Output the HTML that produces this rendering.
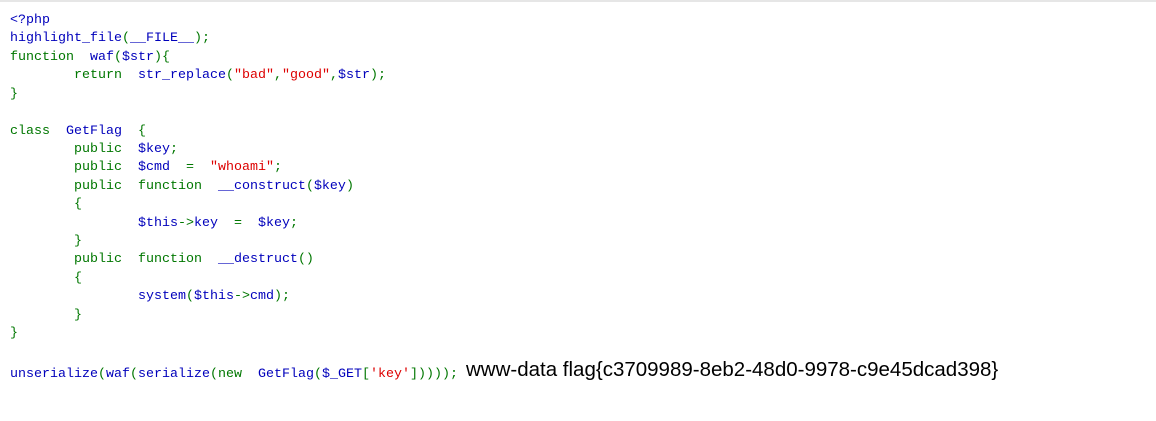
<!DOCTYPE html>
<html><head><meta charset="utf-8"><style>
html,body{margin:0;padding:0;background:#fff;width:1156px;height:421px;overflow:hidden}
.top{position:absolute;left:0;top:0;width:1156px;height:2px;background:#e6e6e6}
code{position:absolute;left:10px;top:12px;font-family:"Liberation Mono","Noto Sans CJK SC",monospace;font-size:13.33px;line-height:18.42px;white-space:pre;color:#0000BB}
.k{color:#007700}.s{color:#DD0000}
.f{font-family:"Liberation Sans","Noto Sans CJK SC",sans-serif;font-size:20.5px;color:#000;position:relative;top:-1px}
</style></head><body><div class="top"></div>
<code>&lt;?php
highlight_file<span class="k">(</span>__FILE__<span class="k">);
function  </span>waf<span class="k">(</span>$str<span class="k">){
        return  </span>str_replace<span class="k">(</span><span class="s">"bad"</span><span class="k">,</span><span class="s">"good"</span><span class="k">,</span>$str<span class="k">);
}

class  </span>GetFlag  <span class="k">{
        public  </span>$key<span class="k">;
        public  </span>$cmd  <span class="k">=  </span><span class="s">"whoami"</span><span class="k">;
        public  function  </span>__construct<span class="k">(</span>$key<span class="k">)
        {
                </span>$this<span class="k">-&gt;</span>key  <span class="k">=  </span>$key<span class="k">;
        }
        public  function  </span>__destruct<span class="k">()
        {
                </span>system<span class="k">(</span>$this<span class="k">-&gt;</span>cmd<span class="k">);
        }
}

</span>unserialize<span class="k">(</span>waf<span class="k">(</span>serialize<span class="k">(new  </span>GetFlag<span class="k">(</span>$_GET<span class="k">[</span><span class="s">'key'</span><span class="k">]))));</span> <span class="f">www-data flag{c3709989-8eb2-48d0-9978-c9e45dcad398}</span></code>
</body></html>
